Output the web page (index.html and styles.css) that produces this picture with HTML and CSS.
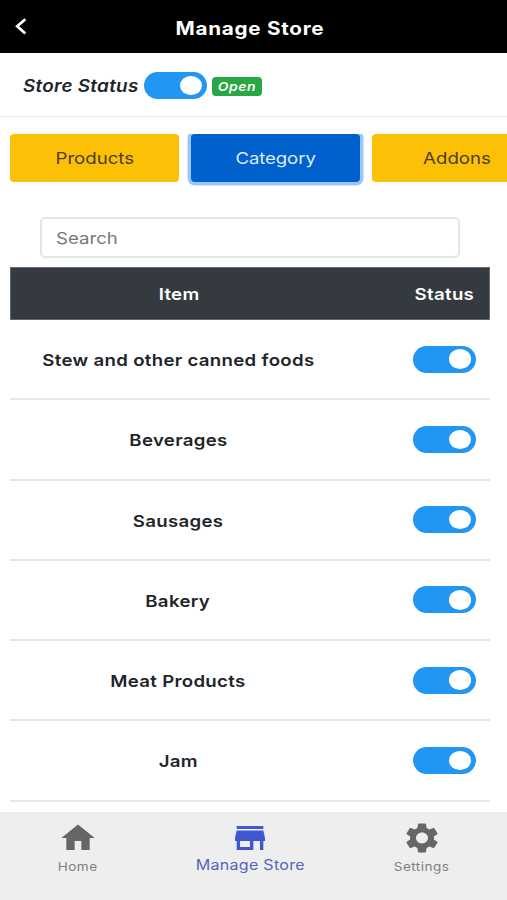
FILE: index.html
```
<!DOCTYPE html>
<html lang="en">
<head>
<meta charset="utf-8">
<title>Manage Store</title>
<link rel="stylesheet" href="styles.css">
</head>
<body>
<header class="topbar">
  <svg class="back" viewBox="0 0 12 17"><path d="M10.3 1.2 2.2 8.3l8.1 7.1" fill="none" stroke="#fff" stroke-width="2.7"/></svg>
  <h1 class="title"><span class="wide">Manage Store</span></h1>
</header>
<section class="store-status">
  <span class="status-label"><span class="wide">Store Status</span></span>
  <span class="toggle"></span>
  <span class="badge"><span class="wide">Open</span></span>
</section>
<nav class="tabs">
  <button class="tab"><span class="wide">Products</span></button>
  <button class="tab active"><span class="wide">Category</span></button>
  <button class="tab"><span class="wide">Addons</span></button>
</nav>
<main class="content">
  <div class="search"><span class="wide">Search</span></div>
  <div class="table">
    <div class="row head"><div><span class="wide">Item</span></div><div class="cell-status"><span class="wide">Status</span></div></div>
    <div class="row"><div class="cell-item"><span class="wide">Stew and other canned foods</span></div><div class="cell-status"><span class="toggle"></span></div></div>
    <div class="row"><div class="cell-item"><span class="wide">Beverages</span></div><div class="cell-status"><span class="toggle"></span></div></div>
    <div class="row"><div class="cell-item"><span class="wide">Sausages</span></div><div class="cell-status"><span class="toggle"></span></div></div>
    <div class="row"><div class="cell-item"><span class="wide">Bakery</span></div><div class="cell-status"><span class="toggle"></span></div></div>
    <div class="row"><div class="cell-item"><span class="wide">Meat Products</span></div><div class="cell-status"><span class="toggle"></span></div></div>
    <div class="row"><div class="cell-item"><span class="wide">Jam</span></div><div class="cell-status"><span class="toggle"></span></div></div>
  </div>
</main>
<footer class="bottom-nav">
  <a class="nav-item"><svg class="icon" viewBox="0 0 24 24" preserveAspectRatio="none"><path d="M10 20v-6h4v6h5v-8h3L12 3 2 12h3v8z"/></svg><span class="wide">Home</span></a>
  <a class="nav-item current"><svg class="icon" viewBox="0 0 24 24" preserveAspectRatio="none"><path d="M20 4H4v2h16V4zm1 10v-2l-1-5H4l-1 5v2h1v6h10v-6h4v6h2v-6h1zm-9 4H6v-4h6v4z"/></svg><span class="wide">Manage Store</span></a>
  <a class="nav-item"><svg class="icon" viewBox="0 0 24 24" preserveAspectRatio="none"><path d="M19.14 12.94c.04-.3.06-.61.06-.94 0-.32-.02-.64-.07-.94l2.03-1.58c.18-.14.23-.41.12-.61l-1.92-3.32c-.12-.22-.37-.29-.59-.22l-2.39.96c-.5-.38-1.03-.7-1.62-.94l-.36-2.54c-.04-.24-.24-.41-.48-.41h-3.84c-.24 0-.43.17-.47.41l-.36 2.54c-.59.24-1.13.57-1.62.94l-2.39-.96c-.22-.08-.47 0-.59.22L2.74 8.87c-.12.21-.08.47.12.61l2.03 1.58c-.05.3-.09.63-.09.94s.02.64.07.94l-2.03 1.58c-.18.14-.23.41-.12.61l1.92 3.32c.12.22.37.29.59.22l2.39-.96c.5.38 1.03.7 1.62.94l.36 2.54c.05.24.24.41.48.41h3.84c.24 0 .44-.17.47-.41l.36-2.54c.59-.24 1.13-.56 1.62-.94l2.39.96c.22.08.47 0 .59-.22l1.92-3.32c.12-.22.07-.47-.12-.61l-2.01-1.58zM12 15.6c-1.98 0-3.6-1.62-3.6-3.6s1.62-3.6 3.6-3.6 3.6 1.62 3.6 3.6-1.62 3.6-3.6 3.6z"/></svg><span class="wide">Settings</span></a>
</footer>
</body>
</html>
```
FILE: styles.css
```
* { box-sizing: border-box; }
body {
  margin: 0;
  height: 900px;
  display: flex;
  flex-direction: column;
  overflow: hidden;
  background: #fff;
  color: #212529;
  font-family: Inter, "Liberation Sans", sans-serif;
  font-size: 16px;
}
.wide { display: inline-block; white-space: nowrap; transform: scaleX(1.13); }
.topbar {
  height: 53px;
  flex: none;
  display: grid;
  grid-template-columns: 30px 1fr 37px;
  align-items: center;
  background: #000;
  color: #fff;
}
.back { width: 12px; height: 17px; margin-left: 15px; }
.title { margin: 2px 0 0; font-size: 18.3px; line-height: 24px; font-weight: 700; letter-spacing: .65px; text-align: center; }
.store-status {
  height: 64px;
  flex: none;
  display: flex;
  align-items: center;
  padding: 2px 0 0 23px;
  border-bottom: 1px solid #e8e8e8;
}
.status-label { width: 121px; font-size: 16.7px; font-weight: 600; font-style: italic; letter-spacing: .25px; }
.status-label .wide, .search .wide { transform-origin: left; }
.toggle {
  display: flex;
  align-items: center;
  justify-content: flex-end;
  width: 62.5px;
  height: 27px;
  padding-right: 5px;
  border-radius: 13.5px;
  background: #2196f3;
}
.toggle::after { content: ""; width: 22px; height: 19.5px; border-radius: 50%; background: #fff; }
.badge {
  width: 50px;
  height: 19px;
  margin: 2px 0 0 5px;
  border-radius: 4px;
  background: #28a745;
  color: #fff;
  font-size: 12.3px;
  line-height: 20px;
  font-weight: 600;
  font-style: italic;
  letter-spacing: .5px;
  text-align: center;
}
.tabs {
  height: 70px;
  flex: none;
  display: flex;
  gap: 12px;
  padding: 0 10px;
  margin-top: 17px;
  overflow: hidden;
}
.tab {
  flex: none;
  width: 169px;
  height: 48px;
  padding: 0;
  border: 0;
  border-radius: 4px;
  background: #fcc107;
  color: #4a3e15;
  font: 400 16.5px/49px Inter, "Liberation Sans", sans-serif;
}
.tab.active { background: #0060cc; color: #dceaff; letter-spacing: -.1px; box-shadow: 0 0 0 3.5px #99c7fa; }
.content { flex: 1; padding: 13px 17px 0 10px; overflow: hidden; }
.search {
  height: 41px;
  margin: 0 30px 9px;
  padding-left: 14px;
  border: 2px solid #e5e6e7;
  border-radius: 5px;
  color: #74797e;
  font-size: 16.5px;
  line-height: 38px;
}
.row {
  display: grid;
  grid-template-columns: 336px 1fr;
  align-items: center;
  height: 80.25px;
  border-bottom: 2px solid #e5e7e9;
  font-size: 16.5px;
  font-weight: 600;
  letter-spacing: .27px;
  text-align: center;
}
.cell-item { padding-top: 2px; }
.cell-status { display: flex; justify-content: flex-end; padding-right: 14.5px; }
.head { height: 53px; border: 1px solid #626970; background: #343a40; color: #fff; }
.head .cell-status { justify-content: center; padding: 0 0 0 53px; }
.bottom-nav {
  height: 88px;
  flex: none;
  display: grid;
  grid-template-columns: 156px 188px 155px;
  background: #eee;
}
.nav-item {
  display: flex;
  flex-direction: column;
  align-items: center;
  padding-top: 8px;
  color: #808080;
  font-size: 12px;
  line-height: 21px;
  letter-spacing: .4px;
}
.icon { width: 40px; height: 36px; fill: #666; }
.current { color: #5265bd; font-size: 14.2px; line-height: 18px; letter-spacing: .25px; }
.current .icon { fill: #3f58d0; }
```
